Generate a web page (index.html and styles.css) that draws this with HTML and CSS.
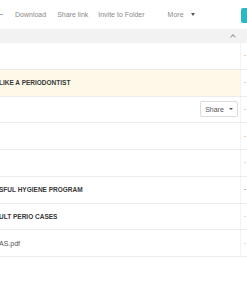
FILE: index.html
```html
<!DOCTYPE html>
<html lang="en">
<head>
    <meta charset="UTF-8">
    <meta name="viewport" content="width=device-width, initial-scale=1.0">
    <title>Files</title>
    <link rel="stylesheet" href="styles.css">
</head>
<body>
    <div class="toolbar">
        <span class="edge"></span>
        <a class="action first">Download</a>
        <a class="action share-link">Share link</a>
        <a class="action invite">Invite to Folder</a>
        <a class="action more">More</a>
        <span class="caret-down"></span>
        <button class="upload"></button>
    </div>

    <div class="subbar">
        <span class="caret-up"></span>
    </div>

    <div class="list">
        <div class="row">
            <div class="title"></div>
            <div class="side"><span class="mark orange"></span></div>
        </div>
        <div class="row highlight">
            <div class="title bold">LIKE A PERIODONTIST</div>
            <div class="side"><span class="mark orange"></span></div>
        </div>
        <div class="row">
            <div class="title">
                <button class="share-btn">Share <span class="caret-small"></span></button>
            </div>
            <div class="side"><span class="mark orange"></span></div>
        </div>
        <div class="row">
            <div class="title"></div>
            <div class="side"><span class="mark orange"></span></div>
        </div>
        <div class="row">
            <div class="title"></div>
            <div class="side"><span class="mark"></span></div>
        </div>
        <div class="row">
            <div class="title bold">SFUL HYGIENE PROGRAM</div>
            <div class="side"><span class="mark red"></span></div>
        </div>
        <div class="row">
            <div class="title bold">ULT PERIO CASES</div>
            <div class="side"><span class="mark"></span></div>
        </div>
        <div class="row">
            <div class="title file">AS.pdf</div>
            <div class="side"><span class="mark"></span></div>
        </div>
    </div>
</body>
</html>
```

FILE: styles.css
```css
body {
    font-family: "Liberation Sans", Arial, sans-serif;
    margin: 0;
    padding: 0;
    background: white;
    overflow: hidden;
}
.toolbar {
    height: 29px;
    display: flex;
    align-items: center;
    font-size: 7px;
    color: #8a8a8a;
}
.edge {
    width: 3px;
    height: 1px;
    background: #aaa;
}
.action {
    white-space: nowrap;
}
.first {
    margin-left: 12px;
}
.share-link {
    margin-left: 11px;
}
.invite {
    margin-left: 10px;
}
.more {
    margin-left: 23px;
}
.caret-down {
    margin-left: 7px;
    border-left: 2.5px solid transparent;
    border-right: 2.5px solid transparent;
    border-top: 3px solid #555;
}
.upload {
    margin-left: auto;
    width: 6px;
    height: 15px;
    margin-top: 2px;
    padding: 0;
    border: none;
    border-radius: 2px 0 0 2px;
    background: #2cb7c9;
}
.subbar {
    height: 14px;
    background: #f2f2f2;
    display: flex;
    justify-content: flex-end;
    align-items: center;
    padding-right: 12px;
}
.caret-up {
    width: 3px;
    height: 3px;
    border-left: 1px solid #999;
    border-top: 1px solid #999;
    transform: rotate(45deg);
    margin-top: 2px;
}
.row {
    display: flex;
    height: 26.75px;
    box-sizing: border-box;
    border-bottom: 1px solid #ececec;
}
.highlight {
    background: #fdf8e7;
}
.title {
    flex: 1;
    display: flex;
    align-items: center;
    border-right: 1px solid #f3f3f3;
    font-size: 6.5px;
    color: #383838;
    margin-left: -1px;
    white-space: nowrap;
}
.bold {
    font-weight: bold;
}
.file {
    color: #555;
    font-size: 7px;
}
.side {
    width: 6px;
    display: flex;
    align-items: center;
    background: white;
}
.mark {
    margin-left: 3px;
    width: 2px;
    height: 1px;
    background: #ddd;
}
.orange {
    background: #f5c69c;
}
.red {
    background: #eba3a3;
}
.share-btn {
    margin-left: auto;
    margin-right: 2px;
    width: 38px;
    height: 16px;
    padding: 0;
    border: 1px solid #dcdcdc;
    border-radius: 2px;
    background: white;
    font-family: "Liberation Sans", Arial, sans-serif;
    font-size: 7px;
    color: #555;
    display: flex;
    align-items: center;
    justify-content: center;
    gap: 5px;
}
.caret-small {
    border-left: 2px solid transparent;
    border-right: 2px solid transparent;
    border-top: 2.5px solid #555;
}
```
